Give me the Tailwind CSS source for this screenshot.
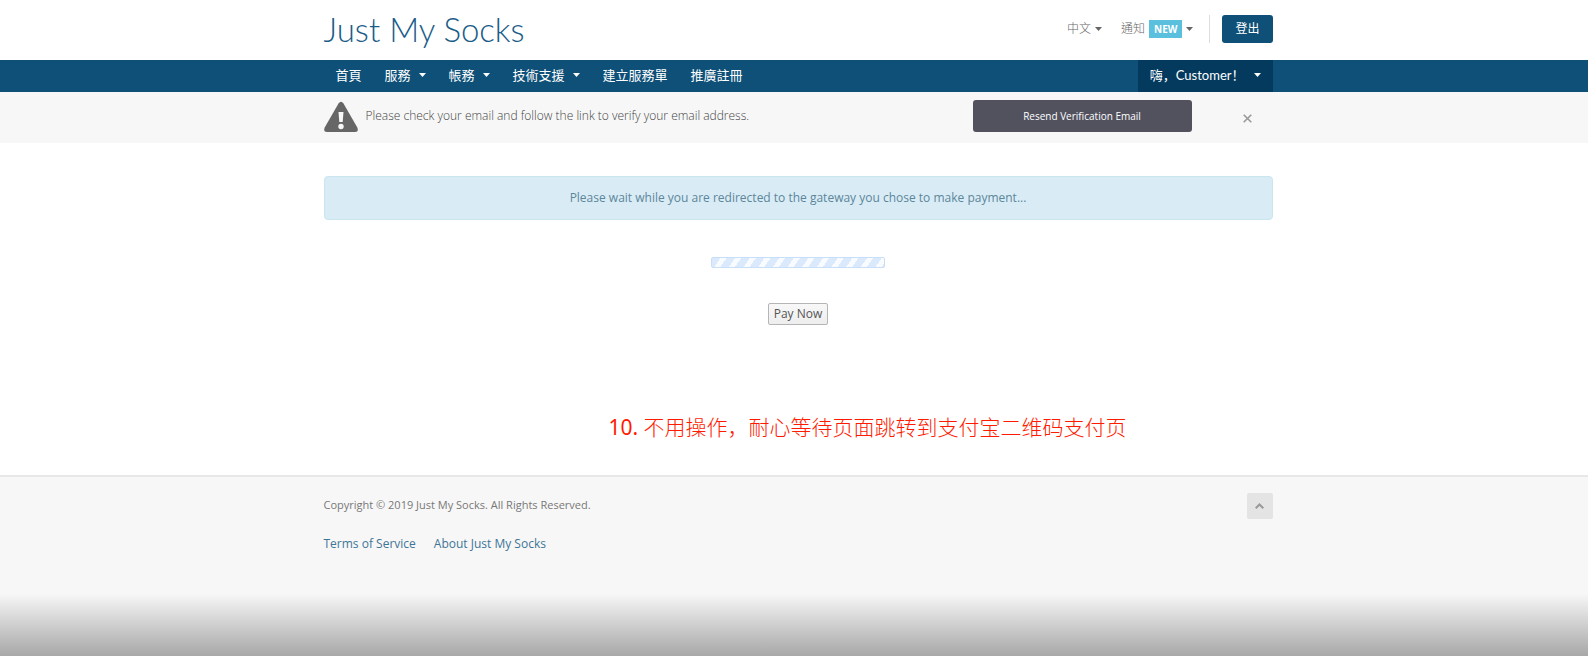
<!DOCTYPE html>
<html lang="zh-Hant">
<head>
<meta charset="utf-8">
<meta name="viewport" content="width=device-width, initial-scale=1">
<title>Just My Socks</title>
<script src="https://cdn.jsdelivr.net/npm/@tailwindcss/browser@4"></script>
</head>
<body class="flex min-h-screen flex-col bg-white font-['Open_Sans','Noto_Sans_CJK_TC',sans-serif] text-[13px] leading-5 text-[#666]">

<header class="pl-2">
  <div class="mx-auto flex h-[60px] max-w-[949px] items-center justify-between pb-0.5">
    <a href="#" class="font-['Lato',sans-serif] text-[33px] leading-10 font-light text-[#1a5c88]">Just My Socks</a>
    <div class="flex items-center text-[#666]">
      <button type="button" class="flex items-center gap-1 text-[12px] font-light">中文
        <svg class="h-1 w-[7px]" viewBox="0 0 7 4" fill="currentColor" aria-hidden="true"><path d="M0 0h7L3.500 4z"/></svg>
      </button>
      <button type="button" class="ml-[19px] flex items-center gap-1 text-[12px] font-light">通知
        <span class="bg-[#5bc0de] px-[5px] text-[10px] leading-[18px] font-bold text-white">NEW</span>
        <svg class="h-1 w-[7px]" viewBox="0 0 7 4" fill="currentColor" aria-hidden="true"><path d="M0 0h7L3.500 4z"/></svg>
      </button>
      <div class="ml-4 border-l border-[#ddd] pl-3"><a href="#" class="block rounded-[3px] bg-[#0e5077] px-[13px] py-1 text-[12px] text-white">登出</a></div>
    </div>
  </div>
</header>

<nav class="bg-[#0e5077] pl-2 text-white">
  <div class="mx-auto flex h-8 max-w-[949px] items-stretch justify-between pl-3">
    <div class="flex items-center gap-[23px] pb-0.5">
      <a href="#">首頁</a>
      <a href="#" class="flex items-center gap-2">服務 <svg class="h-1 w-[7px]" viewBox="0 0 7 4" fill="currentColor" aria-hidden="true"><path d="M0 0h7L3.500 4z"/></svg></a>
      <a href="#" class="flex items-center gap-2">帳務 <svg class="h-1 w-[7px]" viewBox="0 0 7 4" fill="currentColor" aria-hidden="true"><path d="M0 0h7L3.500 4z"/></svg></a>
      <a href="#" class="flex items-center gap-2">技術支援 <svg class="h-1 w-[7px]" viewBox="0 0 7 4" fill="currentColor" aria-hidden="true"><path d="M0 0h7L3.500 4z"/></svg></a>
      <a href="#">建立服務單</a>
      <a href="#">推廣註冊</a>
    </div>
    <button type="button" lang="zh-Hans" class="flex items-center gap-[9px] bg-[#033a5d] px-3 pb-0.5 font-['Lato','Noto_Sans_CJK_SC',sans-serif]">嗨，Customer！ <svg class="h-1 w-[7px]" viewBox="0 0 7 4" fill="currentColor" aria-hidden="true"><path d="M0 0h7L3.500 4z"/></svg></button>
  </div>
</nav>

<section class="bg-[#f7f7f7] pl-2">
  <div class="mx-auto flex h-[51px] max-w-[949px] items-start pt-2">
    <svg class="mt-px h-8 w-[34px] shrink-0" viewBox="0 0 34 32" aria-hidden="true"><path d="M14.500 2.500Q17-1 19.500 2.500L33.300 26.500Q35 31 31 31H3Q-1 31 .700 26.500z" fill="#666"/><path d="M14.500 11h5l-.8 10h-3.400z" fill="#f7f7f7"/><circle cx="17" cy="25.500" r="2.700" fill="#f7f7f7"/></svg>
    <p class="ml-2 pt-1.5 text-[12px] leading-5 font-light text-[#444]">Please check your email and follow the link to verify your email address.</p>
    <button type="button" class="mr-[51px] ml-auto h-8 w-[219px] rounded-[3px] bg-[#52525f] text-[10px] text-white">Resend Verification Email</button>
    <button type="button" aria-label="Close" class="mt-3.5 mr-[21px] text-[#999]"><svg class="size-[9px]" viewBox="0 0 9 9" fill="none" stroke="currentColor" stroke-width="1.600" aria-hidden="true"><path d="M.700 .700l7.600 7.600M8.300 .700L.700 8.300"/></svg></button>
  </div>
</section>

<main class="pl-2">
  <div class="mx-auto flex max-w-[949px] flex-col items-center pt-[33px]">
    <p class="w-full rounded border border-[#c9e6ef] bg-[#d9ecf6] py-[11px] text-center text-[12px] text-[#5c8699]">Please wait while you are redirected to the gateway you chose to make payment...</p>
    <div role="progressbar" aria-label="Redirecting" class="mt-[37px] h-[11px] w-[174px] rounded-[2px] border border-[#c9dff9] bg-[repeating-linear-gradient(125deg,#dae9fc_0px,#dae9fc_7px,#f8fbff_7px,#f8fbff_12px)]"></div>
    <button type="button" class="mt-[35px] h-[22px] w-[60px] rounded-[2px] border border-[#b5b5b5] bg-linear-to-b from-[#f8f8f8] to-[#eee] text-[12px] leading-5 text-[#555]">Pay Now</button>
    <p lang="zh-Hans" class="mt-[86px] mb-[33px] pl-[139px] font-['Noto_Sans_CJK_SC',sans-serif] text-[21px] leading-[30px] font-light text-[#ff1a00]"><span class="font-['Noto_Sans',sans-serif] font-normal">10. </span>不用操作，耐心等待页面跳转到支付宝二维码支付页</p>
  </div>
</main>

<footer class="flex flex-1 flex-col border-t-2 border-[#e8e8e8] bg-[#f7f7f7]">
  <div class="pl-2">
    <div class="mx-auto max-w-[949px] pt-4">
      <div class="flex items-start justify-between">
        <p class="pt-0.5 text-[11px] text-[#777]">Copyright © 2019 Just My Socks. All Rights Reserved.</p>
        <a href="#" aria-label="Back to top" class="flex size-[26px] items-center justify-center rounded-[2px] bg-[#e3e4e3] text-[#999]"><svg class="h-1.5 w-[9px]" viewBox="0 0 9 6" fill="none" stroke="currentColor" stroke-width="2" aria-hidden="true"><path d="M.700 5.300L4.500 1.500l3.800 3.800"/></svg></a>
      </div>
      <div class="mt-[15px] flex gap-[18px] text-[12px] text-[#3f7596]">
        <a href="#">Terms of Service</a>
        <a href="#">About Just My Socks</a>
      </div>
    </div>
  </div>
  <div class="mt-auto h-[62px] bg-linear-to-b from-[#f7f7f7] to-[#a8a8a8]"></div>
</footer>
</body>
</html>
